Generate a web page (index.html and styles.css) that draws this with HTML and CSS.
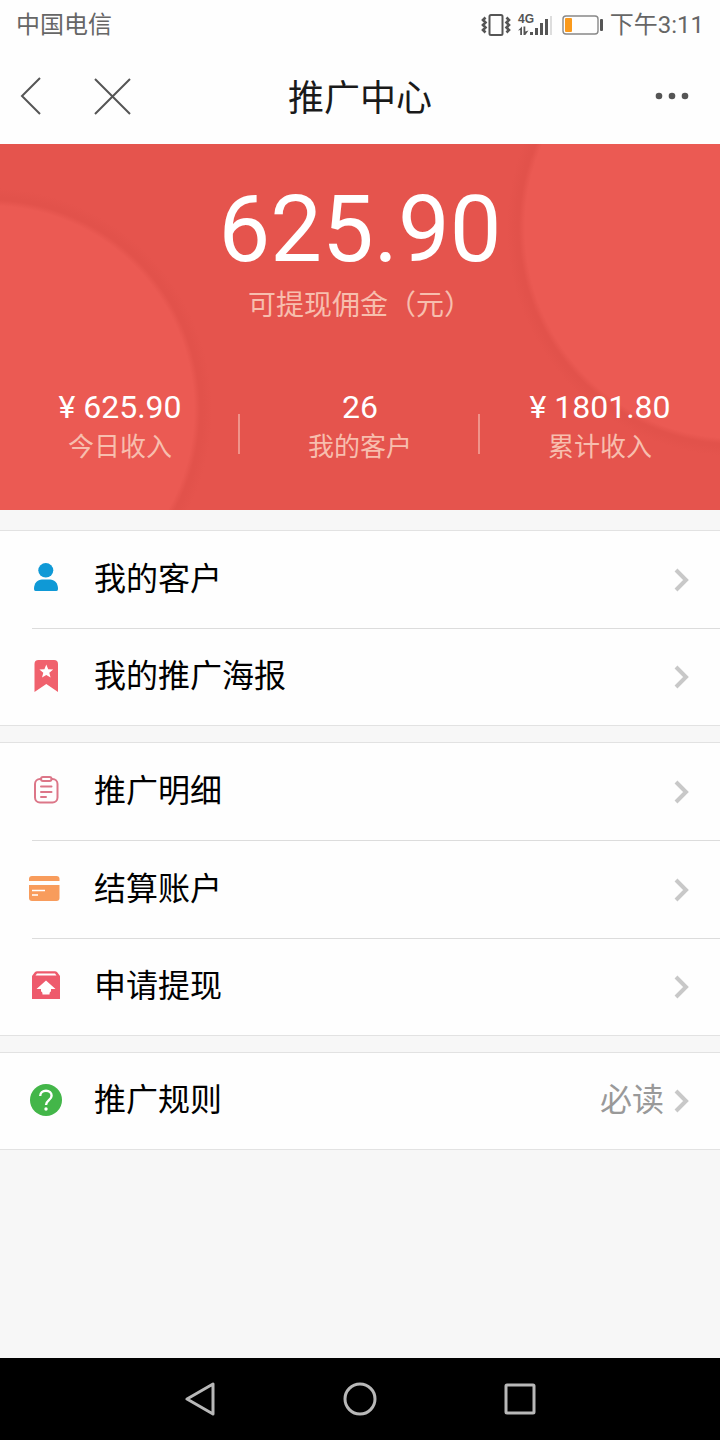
FILE: index.html
```html
<!DOCTYPE html>
<html lang="zh-CN">
<head>
<meta charset="utf-8">
<meta name="viewport" content="width=device-width, initial-scale=1">
<title>推广中心</title>
<link rel="stylesheet" href="styles.css">
</head>
<body>
<div class="status">
  <span>中国电信</span>
  <div class="status-right">
    <svg class="vibrate" width="30" height="24" viewBox="0 0 30 24" fill="none" stroke="#555" stroke-width="2">
      <rect x="8.500" y="2" width="13" height="20" rx="1.500"/>
      <path d="M4.500 4.500L2 7l2.500 2.500L2 12l2.500 2.500L2 17l2.500 2.500M25.500 4.500L28 7l-2.500 2.500L28 12l-2.500 2.500L28 17l-2.500 2.500" stroke-width="2.600"/>
    </svg>
    <svg class="signal" width="36" height="26" viewBox="0 0 36 26">
      <text x="1" y="11" class="network">4G</text>
      <g fill="#555">
        <path d="M1 18.500L5 14.500V23H3.200v-5zM6.500 14.500h1.800v5L11.500 18.500 8.300 23H6.500z"/>
        <rect x="13" y="20" width="3" height="3"/>
        <rect x="18" y="16" width="3" height="7"/>
        <rect x="23" y="11" width="3" height="12"/>
        <rect x="28" y="7" width="3" height="16"/>
        <rect x="33" y="4" width="2" height="19" fill="#ddd"/>
      </g>
    </svg>
    <svg class="battery" width="42" height="20" viewBox="0 0 42 20">
      <rect x="1" y="1" width="35" height="18" rx="3" fill="none" stroke="#888" stroke-width="1.400"/>
      <rect x="3" y="3" width="7" height="14" rx="1" fill="#fb9a1c"/>
      <rect x="38" y="4" width="3" height="12" rx="1" fill="#555"/>
    </svg>
    <span>下午3:11</span>
  </div>
</div>

<header class="bar">
  <div class="bar-left">
    <button type="button" aria-label="返回"><svg width="22" height="38" viewBox="0 0 22 38"><path d="M20 1L2 19l18 18"/></svg></button>
    <button type="button" aria-label="关闭"><svg width="38" height="38" viewBox="0 0 38 38"><path d="M2 2l35 35M37 2L2 37"/></svg></button>
  </div>
  <h1>推广中心</h1>
  <div class="bar-right">
    <button type="button" aria-label="更多"><svg width="34" height="8" viewBox="0 0 34 8"><g fill="#555"><circle cx="4" cy="4" r="3.300"/><circle cx="17" cy="4" r="3.300"/><circle cx="30" cy="4" r="3.300"/></g></svg></button>
  </div>
</header>

<main>
  <section class="hero">
    <div class="total">625.90</div>
    <div class="total-label">可提现佣金（元）</div>
    <div class="stats">
      <div class="stat"><strong>¥ 625.90</strong><span>今日收入</span></div>
      <div class="stat"><strong>26</strong><span>我的客户</span></div>
      <div class="stat"><strong>¥ 1801.80</strong><span>累计收入</span></div>
    </div>
  </section>

  <ul class="group">
    <li><a href="#customers">
      <svg class="icon" viewBox="0 0 32 32" fill="#0f99d6"><ellipse cx="15.800" cy="8.300" rx="7.500" ry="7.300"/><path d="M4 27c0-6 3.500-9.500 8-9.500h8c4.500 0 8 3.500 8 9.500q0 2-1.500 2h-21Q4 29 4 27z"/></svg>
      <span class="name">我的客户</span>
      <svg class="chevron" viewBox="0 0 16 24"><path d="M2 2l10 10L2 22"/></svg>
    </a></li>
    <li><a href="#poster">
      <svg class="icon" viewBox="0 0 32 32"><path fill="#f0616d" d="M4.500 4q0-4 4-4h15.500q4 0 4 4v28L16.300 24 4.500 32z"/><path fill="#fff" d="M16.300 4.500l1.900 4.700 5 .3-3.900 3.200 1.300 4.900-4.300-2.700-4.300 2.700 1.300-4.900-3.900-3.200 5-.3z"/></svg>
      <span class="name">我的推广海报</span>
      <svg class="chevron" viewBox="0 0 16 24"><path d="M2 2l10 10L2 22"/></svg>
    </a></li>
  </ul>

  <ul class="group">
    <li><a href="#details">
      <svg class="icon" viewBox="0 0 32 32" fill="none" stroke="#dc7688" stroke-width="2" stroke-linecap="round"><rect x="5" y="5" width="22.500" height="23.500" rx="5"/><rect x="11" y="3" width="10.500" height="4" rx="2" fill="#fff"/><path d="M11 12.500h10.500M11 18h10.500M11 23h5"/></svg>
      <span class="name">推广明细</span>
      <svg class="chevron" viewBox="0 0 16 24"><path d="M2 2l10 10L2 22"/></svg>
    </a></li>
    <li><a href="#account">
      <svg class="icon card" viewBox="0 0 32 32"><g fill="#f89c5c"><path d="M1 9V7q0-3 3-3h24.500q3 0 3 3v2z"/><path d="M1 13h30.500v13q0 3-3 3H4q-3 0-3-3z"/></g><path d="M4 18.500h13M4 23h6" stroke="#fff" stroke-width="1.500"/></svg>
      <span class="name">结算账户</span>
      <svg class="chevron" viewBox="0 0 16 24"><path d="M2 2l10 10L2 22"/></svg>
    </a></li>
    <li><a href="#withdraw">
      <svg class="icon" viewBox="0 0 32 32"><path fill="#ee5a6c" d="M2 6l3-4q1-.800 2-.800h18q1 0 2 .800l3 4v23H2z"/><path d="M5.500 5.500l1.500-2h18l1.500 2z" fill="#fff"/><path d="M16 10.500l9.500 8.500H21v2.500q-1.500 0-1.500 3h-7q0-3-1.500-3V19H6.500z" fill="#fff"/></svg>
      <span class="name">申请提现</span>
      <svg class="chevron" viewBox="0 0 16 24"><path d="M2 2l10 10L2 22"/></svg>
    </a></li>
  </ul>

  <ul class="group">
    <li><a href="#rules">
      <svg class="icon" viewBox="0 0 32 32"><circle cx="16" cy="16" r="16" fill="#43b649"/><path d="M10.200 12c0-3.300 2.500-5.200 5.800-5.200s5.600 1.900 5.600 4.900c0 4.300-5.600 4.500-5.600 9.300" fill="none" stroke="#fff" stroke-width="2.400"/><circle cx="16" cy="25" r="1.700" fill="#fff"/></svg>
      <span class="name">推广规则</span>
      <span class="note">必读</span>
      <svg class="chevron" viewBox="0 0 16 24"><path d="M2 2l10 10L2 22"/></svg>
    </a></li>
  </ul>
</main>

<nav class="system">
  <button type="button" aria-label="后退"><svg viewBox="0 0 34 34"><path d="M30 2v30L4 17z"/></svg></button>
  <button type="button" aria-label="主屏幕"><svg viewBox="0 0 34 34"><circle cx="17" cy="17" r="15"/></svg></button>
  <button type="button" aria-label="最近任务"><svg viewBox="0 0 34 34"><rect x="3" y="3" width="28" height="28" rx="1"/></svg></button>
</nav>
</body>
</html>
```

FILE: styles.css
```css
* {
  box-sizing: border-box;
}

body {
  margin: 0;
  min-height: 100vh;
  display: flex;
  flex-direction: column;
  background: #f7f7f7;
  color: #000;
  font-family: Roboto, "Noto Sans CJK SC", sans-serif;
}

svg {
  display: block;
  flex: none;
}

button {
  border: 0;
  padding: 0;
  background: none;
  cursor: pointer;
}

main {
  flex: 1;
}

.status {
  display: flex;
  justify-content: space-between;
  align-items: center;
  height: 50px;
  padding: 0 16px;
  background: #fefefe;
  color: #666;
  font-size: 24px;
  line-height: 32px;
}

.status-right {
  display: flex;
  align-items: center;
}

.signal {
  margin: 0 9px 0 6px;
}

.battery {
  margin-right: 6px;
}

.network {
  font: 700 12px "Liberation Sans", sans-serif;
  fill: #555;
}

.bar {
  display: grid;
  grid-template-columns: 1fr auto 1fr;
  align-items: center;
  height: 94px;
  padding: 0 20px 2px;
  background: #fefefe;
}

.bar h1 {
  margin: 0;
  padding-top: 6px;
  font-size: 36px;
  font-weight: 400;
  line-height: 48px;
  color: #1a1a1a;
}

.bar-left {
  display: flex;
  gap: 51px;
}

.bar-left path {
  fill: none;
  stroke: #555;
  stroke-width: 2;
}

.bar-right {
  display: flex;
  justify-content: flex-end;
  padding-right: 11px;
}

.hero {
  padding: 30px 0 44px;
  text-align: center;
  color: #fff;
  background:
    radial-gradient(circle at -10px 266px, #eb5a53 204px, #e2524b 210px, #e2524b 213px, transparent 222px),
    radial-gradient(circle at calc(100% + 15px) 84px, #eb5a53 210px, #e2524b 216px, #e2524b 219px, transparent 228px),
    #e5544d;
}

.total {
  font-size: 92px;
  line-height: 112px;
}

.total-label {
  font-size: 28px;
  line-height: 40px;
  color: #f7beae;
}

.stats {
  display: grid;
  grid-template-columns: repeat(3, 1fr);
  margin-top: 60px;
}

.stat {
  position: relative;
  display: flex;
  flex-direction: column;
}

.stat strong {
  font-size: 32px;
  font-weight: 400;
  line-height: 42px;
}

.stat span {
  font-size: 26px;
  line-height: 38px;
  color: #f7beae;
}

.stat + .stat::before {
  content: "";
  position: absolute;
  left: -2px;
  top: 28px;
  width: 2px;
  height: 40px;
  background: #f0938a;
}

.group {
  list-style: none;
  margin: 20px 0 0;
  padding: 0 0 0 32px;
  background: #fefefe;
  border: solid #e2e2e2;
  border-width: 1px 0;
}

.group + .group {
  margin-top: 16px;
}

.group li + li {
  border-top: 1px solid #dcdcdc;
}

.group a {
  display: flex;
  align-items: center;
  min-height: 97px;
  padding-right: 30px;
  color: #000;
  font-size: 32px;
  line-height: 48px;
  text-decoration: none;
}

.group li:last-child a {
  min-height: 96px;
}

.icon {
  width: 32px;
  height: 32px;
  margin: 0 32px 3px -2px;
}

.card {
  margin: 0 34px 3px -4px;
}

.name,
.note {
  padding-bottom: 2px;
}

.name {
  flex: 1;
}

.note {
  color: #999;
}

.chevron {
  width: 16px;
  height: 24px;
  margin-left: 10px;
}

.chevron path {
  fill: none;
  stroke: #c8c8c8;
  stroke-width: 4;
}

.system {
  display: flex;
  justify-content: center;
  height: 82px;
  background: #000;
}

.system button {
  width: 160px;
  display: flex;
  align-items: center;
  justify-content: center;
}

.system svg {
  width: 34px;
  height: 34px;
  fill: none;
  stroke: #b8b8b8;
  stroke-width: 3;
  stroke-linejoin: round;
}
```
